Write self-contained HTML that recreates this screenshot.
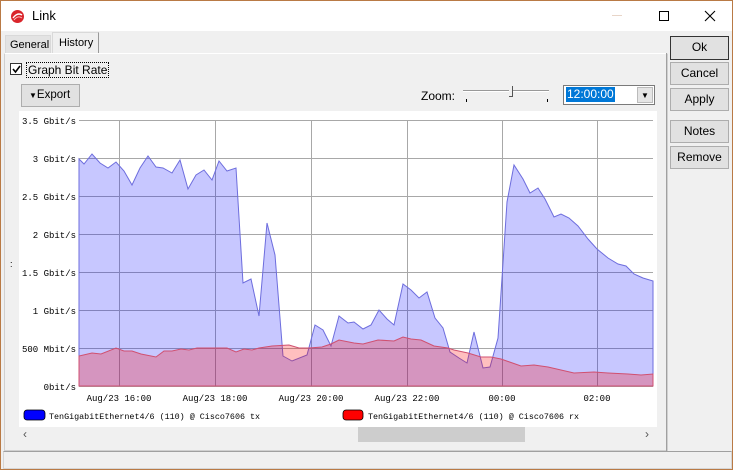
<!DOCTYPE html>
<html><head><meta charset="utf-8"><style>
*{margin:0;padding:0;box-sizing:border-box}
body{width:733px;height:470px;overflow:hidden;font-family:"Liberation Sans",sans-serif;font-size:12px;color:#000;background:#f0f0f0;position:relative}
.win{position:absolute;left:0;top:0;width:733px;height:470px;border:1px solid #b97a45;background:#f0f0f0}
.title{position:absolute;left:0;top:0;width:731px;height:30px;background:#fff}
.abs{position:absolute}
.btn{position:absolute;left:669px;width:59px;height:23px;border:1px solid #adadad;background:#e1e1e1;text-align:center;line-height:21px;font-size:12px}
</style></head><body><div class="win">
<div class="title">
 <svg class="abs" style="left:9px;top:8px" width="15" height="15" viewBox="0 0 15 15"><circle cx="7.5" cy="7.5" r="6.5" fill="#d9252b"/><path d="M3 9 Q7.5 3 12 6" stroke="#fff" stroke-width="1.4" fill="none"/><path d="M4 11 Q8 6 12 9" stroke="#fbb" stroke-width="1" fill="none"/></svg>
 <div class="abs" style="left:31px;top:7px;font-size:13px">Link</div>
 <div class="abs" style="left:611px;top:14px;width:10px;height:1px;background:#e8d5c8"></div>
 <div class="abs" style="left:658px;top:10px;width:10px;height:10px;border:1px solid #000"></div>
 <svg class="abs" style="left:703px;top:9px" width="12" height="12"><path d="M1 1L11 11M11 1L1 11" stroke="#000" stroke-width="1.1"/></svg>
</div>
<div class="abs" style="left:4px;top:34px;width:46px;height:19px;background:#e3e3e3;border:1px solid #d9d9d9;font-size:11px;line-height:18px;padding-left:4px;white-space:nowrap">General</div>
<div class="abs" style="left:51px;top:31px;width:47px;height:22px;background:#f0f0f0;border:1px solid #d9d9d9;border-right-color:#999;border-bottom:none;font-size:11px;line-height:20px;padding-left:6px;white-space:nowrap">History</div>
<div class="abs" style="left:3px;top:52px;width:664px;height:398px;border:1px solid #d0d0d0;border-top-color:#fff"></div>
<div class="abs" style="left:9px;top:62px;width:12px;height:12px;border:1px solid #333;background:#fff"></div>
<svg class="abs" style="left:10px;top:63px" width="11" height="11"><path d="M2 5L4.5 8L9 2" stroke="#000" stroke-width="1.6" fill="none"/></svg>
<div class="abs" style="left:25px;top:61px;border:1px dotted #000;padding:0 1px;font-size:12px;line-height:14px">Graph Bit Rate</div>
<div class="abs" style="left:20px;top:83px;width:59px;height:23px;border:1px solid #adadad;background:#e1e1e1;font-size:11.5px;line-height:21px;padding-left:7px;white-space:nowrap"><span style="font-size:8px">&#9660;</span>Export</div>
<div class="abs" style="left:420px;top:88px;font-size:12px">Zoom:</div>
<div class="abs" style="left:462px;top:89px;width:86px;height:2px;border-top:1px solid #999;border-bottom:1px solid #fff"></div>
<div class="abs" style="left:508px;top:85px;width:4px;height:11px;border-right:1px solid #555;border-bottom:1px solid #555;background:#f0f0f0"></div>
<div class="abs" style="left:465px;top:98px;width:1px;height:3px;background:#000"></div>
<div class="abs" style="left:546px;top:98px;width:1px;height:3px;background:#000"></div>
<div class="abs" style="left:562px;top:84px;width:92px;height:20px;border:1px solid #7a7a7a;background:#fff"></div>
<div class="abs" style="left:565px;top:86px;height:15px;background:#0078d7;color:#fff;font-size:12px;line-height:15px;padding:0 1px">12:00:00</div>
<div class="abs" style="left:636px;top:86px;width:16px;height:16px;background:#e5e5e5;border:1px solid #bbb;font-size:8px;text-align:center;line-height:15px">&#9660;</div>
<div class="btn" style="top:35px;border:1px solid #333;height:24px">Ok</div>
<div class="btn" style="top:61px">Cancel</div>
<div class="btn" style="top:87px">Apply</div>
<div class="btn" style="top:119px">Notes</div>
<div class="btn" style="top:145px">Remove</div>
<div class="abs" style="left:665px;top:52px;width:1px;height:398px;background:#a0a0a0"></div>
<div class="abs" style="left:9px;top:258px;font-size:9px">:</div>
<svg class="abs" style="left:18px;top:110px" width="638" height="316">
<rect width="638" height="316" fill="#fff"/>
<g transform="translate(-18,-110)">
<g stroke="#a8a8a8" stroke-width="1">
<path d="M78 119.5H652M78 157.5H652M78 195.5H652M78 233.5H652M78 271.5H652M78 309.5H652M78 347.5H652M78 385.5H652"/>
<path d="M118.5 119V386M214.5 119V386M310.5 119V386M406.5 119V386M501.5 119V386M596.5 119V386"/>
</g>
<path fill="rgba(0,0,255,0.22)" stroke="#6d6ddd" stroke-width="1" d="M78 385L78 158L83 163L91 153L99 162L107 167L115 161L123 170L131 184L139 167L147 155L155 166L162 167L171 172L179 159L187 188L195 174L203 169L211 179L218 160L226 170L235 167L242 282L250 278L258 315L266 222L274 254L282 355L291 360L306 354L314 324L322 329L330 345L338 315L347 322L353 321L362 328L370 324L378 309L386 318L393 324L402 283L410 289L418 297L426 291L434 317L442 327L449 351L458 357L466 362L473 331L482 367L489 366L497 337L501 277L506 201L513 164L522 178L529 192L537 187L544 198L553 216L560 213L568 217L577 225L587 238L596 248L607 257L617 263L625 265L633 273L642 277L652 280L652 385Z"/>
<path fill="rgba(255,0,0,0.25)" stroke="#d05070" stroke-width="1" d="M78 385L78 355L91 352L100 353L115 347L123 350L131 350L140 353L155 356L163 350L171 350L180 348L188 349L196 347L211 347L226 347L235 351L243 348L251 349L258 347L271 345L288 344L298 347L308 347L321 346L330 343L338 339L353 342L362 343L377 339L393 340L402 336L410 338L420 339L433 345L447 347L453 349L467 352L480 356L490 356L500 358L520 365L533 364L547 366L573 372L593 371L607 372L627 373L640 374L652 373L652 385Z"/>
<g font-family="Liberation Mono,monospace" font-size="9" fill="#000" text-anchor="end">
<text x="75" y="123">3.5 Gbit/s</text><text x="75" y="161">3 Gbit/s</text><text x="75" y="199">2.5 Gbit/s</text><text x="75" y="237">2 Gbit/s</text><text x="75" y="275">1.5 Gbit/s</text><text x="75" y="313">1 Gbit/s</text><text x="75" y="351">500 Mbit/s</text><text x="75" y="389">0bit/s</text>
</g>
<g font-family="Liberation Mono,monospace" font-size="9" fill="#000" text-anchor="middle">
<text x="118" y="400">Aug/23 16:00</text><text x="214" y="400">Aug/23 18:00</text><text x="310" y="400">Aug/23 20:00</text><text x="406" y="400">Aug/23 22:00</text><text x="501" y="400">00:00</text><text x="596" y="400">02:00</text>
</g>
<rect x="23" y="409" width="21" height="10" rx="3" fill="#0000ff" stroke="#000" stroke-width="0.8"/>
<rect x="342" y="409" width="20" height="10" rx="3" fill="#ff0000" stroke="#000" stroke-width="0.8"/>
<g font-family="Liberation Mono,monospace" font-size="8.4" fill="#000">
<text x="48" y="418">TenGigabitEthernet4/6 (110) @ Cisco7606 tx</text>
<text x="367" y="418">TenGigabitEthernet4/6 (110) @ Cisco7606 rx</text>
</g>
</g>
</svg>
<div class="abs" style="left:18px;top:426px;width:638px;height:15px;background:#f0f0f0"></div>
<div class="abs" style="left:357px;top:426px;width:167px;height:15px;background:#cdcdcd"></div>
<div class="abs" style="left:22px;top:426px;font-size:12px;color:#555">&#8249;</div>
<div class="abs" style="left:644px;top:426px;font-size:12px;color:#555">&#8250;</div>
<div class="abs" style="left:2px;top:450px;width:729px;height:18px;border:1px solid #d6d6d6;border-top-color:#a0a0a0"></div>
</div></body></html>
